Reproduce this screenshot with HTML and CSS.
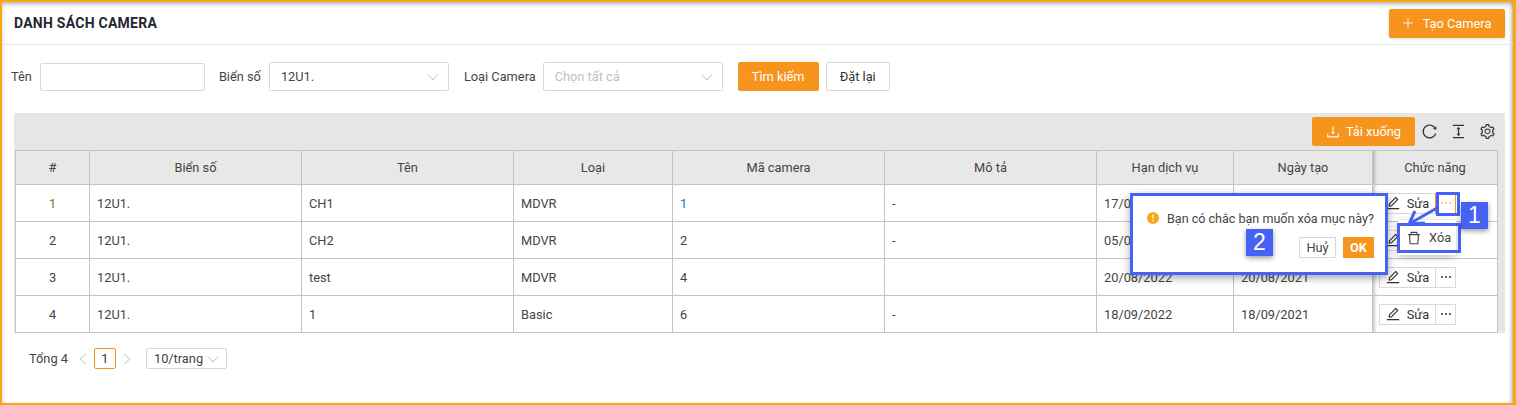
FILE: index.html
```html
<!DOCTYPE html>
<html lang="vi">
<head>
<meta charset="UTF-8" />
<meta name="viewport" content="width=device-width, initial-scale=1" />
<title>Danh sách camera</title>
<link rel="stylesheet" href="styles.css">
</head>
<body>

<svg class="sprite" aria-hidden="true">
  <symbol id="i-download" viewBox="64 64 896 896"><path d="M505.7 661a8 8 0 0 0 12.6 0l112-141.7c4.1-5.2.4-12.9-6.3-12.9h-74.1V168c0-4.4-3.6-8-8-8h-60c-4.4 0-8 3.6-8 8v338.3H400c-6.7 0-10.4 7.7-6.3 12.9l112 141.8zM878 626h-60c-4.4 0-8 3.6-8 8v154H214V634c0-4.4-3.6-8-8-8h-60c-4.4 0-8 3.6-8 8v198c0 17.7 14.3 32 32 32h684c17.7 0 32-14.3 32-32V634c0-4.4-3.6-8-8-8z"/></symbol>
  <symbol id="i-reload" viewBox="64 64 896 896"><path d="M909.1 209.3l-56.4 44.1C775.8 155.1 656.2 92 521.9 92 290 92 102.3 279.5 102 511.5 101.7 743.7 289.8 932 521.9 932c181.3 0 335.8-115 394.6-276.1 1.5-4.2-.7-8.9-4.9-10.3l-56.7-19.5a8 8 0 0 0-10.1 4.8c-1.8 5-3.8 10-5.9 14.9-17.3 41-42.1 77.8-73.7 109.4A344.77 344.77 0 0 1 655.9 829c-42.3 17.9-87.4 27-133.8 27-46.5 0-91.5-9.1-133.8-27A341.5 341.5 0 0 1 279 755.2a342.16 342.16 0 0 1-73.7-109.4c-17.9-42.4-27-87.4-27-133.9s9.1-91.5 27-133.9c17.3-41 42.1-77.8 73.7-109.4 31.6-31.6 68.4-56.4 109.3-73.8 42.3-17.9 87.4-27 133.8-27 46.5 0 91.5 9.1 133.8 27a341.5 341.5 0 0 1 109.3 73.8c9.9 9.9 19.2 20.4 27.8 31.4l-60.2 47a8 8 0 0 0 3 14.1l175.6 43c5 1.2 9.9-2.6 9.9-7.7l.8-180.9c-.1-6.6-7.8-10.3-13-6.2z"/></symbol>
  <symbol id="i-height" viewBox="64 64 896 896"><path d="M840 836H184c-4.4 0-8 3.6-8 8v60c0 4.4 3.6 8 8 8h656c4.4 0 8-3.6 8-8v-60c0-4.4-3.6-8-8-8zm0-724H184c-4.4 0-8 3.6-8 8v60c0 4.4 3.6 8 8 8h656c4.4 0 8-3.6 8-8v-60c0-4.4-3.6-8-8-8zM610.8 378c6 0 9.4-7 5.7-11.7L515.7 238.7a7.14 7.14 0 0 0-11.3 0L403.6 366.3a7.23 7.23 0 0 0 5.7 11.7H476v268h-62.8c-6 0-9.4 7-5.7 11.7l100.8 127.5c2.9 3.7 8.5 3.7 11.3 0l100.8-127.5c3.7-4.7.4-11.7-5.7-11.7H548V378h62.8z"/></symbol>
  <symbol id="i-setting" viewBox="64 64 896 896"><path d="M924.8 625.7l-65.5-56c3.1-19 4.7-38.4 4.7-57.8s-1.6-38.8-4.7-57.8l65.5-56a32.03 32.03 0 0 0 9.3-35.2l-.9-2.6a443.74 443.74 0 0 0-79.7-137.9l-1.8-2.1a32.12 32.12 0 0 0-35.1-9.5l-81.3 28.9c-30-24.6-63.5-44-99.7-57.6l-15.7-85a32.05 32.05 0 0 0-25.8-25.7l-2.7-.5c-52.1-9.4-106.9-9.4-159 0l-2.7.5a32.05 32.05 0 0 0-25.8 25.7l-15.8 85.4a351.86 351.86 0 0 0-99 57.4l-81.9-29.1a32 32 0 0 0-35.1 9.5l-1.8 2.1a446.02 446.02 0 0 0-79.7 137.9l-.9 2.6c-4.5 12.5-.8 26.5 9.3 35.2l66.3 56.6c-3.1 18.8-4.6 38-4.6 57.1 0 19.2 1.5 38.4 4.6 57.1L99 625.5a32.03 32.03 0 0 0-9.3 35.2l.9 2.6c18.1 50.4 44.9 96.9 79.7 137.9l1.8 2.1a32.12 32.12 0 0 0 35.1 9.5l81.9-29.1c29.8 24.5 63.1 43.9 99 57.4l15.8 85.4a32.05 32.05 0 0 0 25.8 25.7l2.7.5a449.4 449.4 0 0 0 159 0l2.7-.5a32.05 32.05 0 0 0 25.8-25.7l15.7-85a350 350 0 0 0 99.7-57.6l81.3 28.9a32 32 0 0 0 35.1-9.5l1.8-2.1c34.8-41.1 61.6-87.5 79.7-137.9l.9-2.6c4.5-12.3.8-26.3-9.3-35zM788.3 465.9c2.5 15.1 3.8 30.6 3.8 46.1s-1.3 31-3.8 46.1l-6.6 40.1 74.7 63.9a370.03 370.03 0 0 1-42.6 73.6L721 702.8l-31.4 25.8c-23.9 19.6-50.5 35-79.3 45.8l-38.1 14.3-17.9 97a377.5 377.5 0 0 1-85 0l-17.9-97.2-37.8-14.5c-28.5-10.8-55-26.2-78.7-45.7l-31.4-25.9-93.4 33.2c-17-22.9-31.2-47.6-42.6-73.6l75.5-64.5-6.5-40c-2.4-14.9-3.7-30.3-3.7-45.5 0-15.3 1.2-30.6 3.7-45.5l6.5-40-75.5-64.5c11.3-26.1 25.6-50.7 42.6-73.6l93.4 33.2 31.4-25.9c23.7-19.5 50.2-34.9 78.7-45.7l37.9-14.3 17.9-97.2c28.1-3.2 56.8-3.2 85 0l17.9 97 38.1 14.3c28.7 10.8 55.4 26.2 79.3 45.8l31.4 25.8 92.8-32.9c17 22.9 31.2 47.7 42.6 73.6L781.8 426l6.5 39.9zM512 326c-97.2 0-176 78.8-176 176s78.8 176 176 176 176-78.8 176-176-78.8-176-176-176zm79.2 255.2A111.6 111.6 0 0 1 512 614c-29.9 0-58-11.7-79.2-32.8A111.6 111.6 0 0 1 400 502c0-29.9 11.7-58 32.8-79.2C454 401.6 482.1 390 512 390c29.9 0 58 11.6 79.2 32.8A111.6 111.6 0 0 1 624 502c0 29.9-11.7 58-32.8 79.2z"/></symbol>
  <symbol id="i-edit" viewBox="64 64 896 896"><path d="M257.7 752c2 0 4-.2 6-.5L431.9 722c2-.4 3.9-1.3 5.3-2.8l423.9-423.9a9.96 9.96 0 0 0 0-14.1L694.9 114.9c-1.9-1.9-4.4-2.9-7.1-2.9s-5.2 1-7.1 2.9L256.8 538.8c-1.5 1.5-2.4 3.3-2.8 5.3l-29.5 168.2a33.5 33.5 0 0 0 9.4 29.8c6.6 6.4 14.9 9.9 23.8 9.9zm67.4-174.4L687.8 215l73.3 73.3-362.7 362.6-88.9 15.7 15.6-89zM880 836H144c-17.7 0-32 14.3-32 32v36c0 4.4 3.6 8 8 8h784c4.4 0 8-3.6 8-8v-36c0-17.7-14.3-32-32-32z"/></symbol>
  <symbol id="i-delete" viewBox="64 64 896 896"><path d="M360 184h-8c4.4 0 8-3.6 8-8v8h304v-8c0 4.4 3.6 8 8 8h-8v72h72v-80c0-35.3-28.7-64-64-64H352c-35.3 0-64 28.7-64 64v80h72v-72zm504 72H160c-17.7 0-32 14.3-32 32v32c0 4.4 3.6 8 8 8h60.4l24.7 523c1.6 34.1 29.8 61 63.9 61h454c34.2 0 62.3-26.8 63.9-61l24.7-523H888c4.4 0 8-3.6 8-8v-32c0-17.7-14.3-32-32-32zM731.3 840H292.7l-24.2-512h487l-24.2 512z"/></symbol>
  <symbol id="i-down" viewBox="0 0 12 12"><path d="M1 3.500 6 9l5-5.500" fill="none" stroke="currentColor" stroke-width="1"/></symbol>
  <symbol id="i-dots" viewBox="0 0 12 12"><circle cx="2" cy="6" r="1"/><circle cx="6" cy="6" r="1"/><circle cx="10" cy="6" r="1"/></symbol>
</svg>

<div class="page">
  <header class="page-head">
    <h1>DANH SÁCH CAMERA</h1>
    <button class="btn btn-primary btn-create">
      <svg class="plus" viewBox="0 0 12 12"><path d="M6 0v12M0 6h12" stroke="currentColor" fill="none"/></svg>
      Tạo Camera
    </button>
  </header>

  <form class="filters">
    <label class="filter-label">Tên</label>
    <input class="field field-name" type="text" />
    <label class="filter-label">Biển số</label>
    <div class="field select select-plate">12U1.<svg class="chev"><use href="#i-down"/></svg></div>
    <label class="filter-label">Loại Camera</label>
    <div class="field select select-type placeholder">Chọn tất cả<svg class="chev"><use href="#i-down"/></svg></div>
    <button type="button" class="btn btn-primary btn-search">Tìm kiếm</button>
    <button type="button" class="btn btn-reset">Đặt lại</button>
  </form>

  <section class="grid-wrap">
    <div class="toolbar">
      <button class="btn btn-primary btn-download"><svg class="ico-14"><use href="#i-download"/></svg>Tải xuống</button>
      <svg class="tool"><use href="#i-reload"/></svg>
      <svg class="tool"><use href="#i-height"/></svg>
      <svg class="tool"><use href="#i-setting"/></svg>
    </div>
    <table class="grid">
      <colgroup>
        <col class="c-no"><col class="c-wide"><col class="c-wide"><col class="c-type"><col class="c-wide"><col class="c-wide"><col class="c-date"><col class="c-created"><col class="c-act">
      </colgroup>
      <thead>
        <tr>
          <th>#</th><th>Biển số</th><th>Tên</th><th>Loại</th><th>Mã camera</th><th>Mô tả</th><th>Hạn dịch vụ</th><th>Ngày tạo</th><th class="fixed">Chức năng</th>
        </tr>
      </thead>
      <tbody>
        <tr>
          <td class="no">1</td><td>12U1.</td><td>CH1</td><td>MDVR</td><td class="code">1</td><td>-</td><td>17/09/2022</td><td>17/09/2021</td>
          <td class="fixed"><div class="actions"><button class="act-edit"><svg class="ico-14"><use href="#i-edit"/></svg>Sửa</button><button class="act-more is-open"><svg class="ico-12"><use href="#i-dots"/></svg></button></div></td>
        </tr>
        <tr>
          <td class="no">2</td><td>12U1.</td><td>CH2</td><td>MDVR</td><td>2</td><td>-</td><td>05/09/2022</td><td>05/09/2021</td>
          <td class="fixed"><div class="actions"><button class="act-edit"><svg class="ico-14"><use href="#i-edit"/></svg>Sửa</button><button class="act-more"><svg class="ico-12"><use href="#i-dots"/></svg></button></div></td>
        </tr>
        <tr>
          <td class="no">3</td><td>12U1.</td><td>test</td><td>MDVR</td><td>4</td><td></td><td>20/08/2022</td><td>20/08/2021</td>
          <td class="fixed"><div class="actions"><button class="act-edit"><svg class="ico-14"><use href="#i-edit"/></svg>Sửa</button><button class="act-more"><svg class="ico-12"><use href="#i-dots"/></svg></button></div></td>
        </tr>
        <tr>
          <td class="no">4</td><td>12U1.</td><td>1</td><td>Basic</td><td>6</td><td>-</td><td>18/09/2022</td><td>18/09/2021</td>
          <td class="fixed"><div class="actions"><button class="act-edit"><svg class="ico-14"><use href="#i-edit"/></svg>Sửa</button><button class="act-more"><svg class="ico-12"><use href="#i-dots"/></svg></button></div></td>
        </tr>
      </tbody>
    </table>
  </section>

  <nav class="pager">
    <span class="total">Tổng 4</span>
    <svg class="pager-arrow" viewBox="0 0 8 12"><path d="M7 1 1 6l6 5" fill="none" stroke="currentColor"/></svg>
    <span class="page-num">1</span>
    <svg class="pager-arrow" viewBox="0 0 8 12"><path d="m1 1 6 5-6 5" fill="none" stroke="currentColor"/></svg>
    <span class="page-size">10/trang<svg class="chev"><use href="#i-down"/></svg></span>
  </nav>

  <!-- popups and tutorial marks sit over the table -->
  <div class="menu"><svg class="ico-14"><use href="#i-delete"/></svg>Xóa</div>

  <div class="popconfirm">
    <p class="pop-msg">
      <svg class="pop-ico" viewBox="0 0 12 12"><circle cx="6" cy="6" r="6" fill="#faa61a"/><path d="M6 2.500v4.200M6 8v1.500" stroke="#fff" stroke-width="1.300" fill="none"/></svg>
      Bạn có chắc bạn muốn xóa mục này?
    </p>
    <div class="pop-btns">
      <button class="pop-cancel">Huỷ</button>
      <button class="pop-ok">OK</button>
    </div>
  </div>

  <div class="mark mark-more"></div>
  <div class="mark mark-del"></div>
  <svg class="arrow" viewBox="0 0 34 22"><path d="M31 2 3 18M9 5 3 18l16-1" stroke="#4662f5" stroke-width="3" fill="none"/></svg>
  <span class="step step-1">1</span>
  <span class="step step-2">2</span>
</div>

</body>
</html>
```

FILE: styles.css
```css
* {
  box-sizing: border-box;
}

body {
  margin: 0;
  background: #fff;
  font-family: Roboto, 'Liberation Sans', Arial, sans-serif;
  font-size: 12.8px;
  color: #333;
}

button {
  font-family: inherit;
  font-size: 12.8px;
  cursor: pointer;
}

.sprite {
  display: none;
}

.page {
  position: relative;
  height: 405px;
  overflow: hidden;
  border: solid #f9a90f;
  border-width: 2px 3px 2px 2px;
  box-shadow: inset 0 3px 5px -1px rgb(0 0 0 / 0.28), inset -3px 0 4px -2px rgb(0 0 0 / 0.3);
}

/* Header */
.page-head {
  display: flex;
  align-items: center;
  justify-content: space-between;
  height: 43px;
  padding: 0 8px 0 12px;
  border-bottom: 1px solid #e8e8e8;
}

.page-head h1 {
  margin: 0;
  font-size: 14px;
  font-weight: 700;
  letter-spacing: 0.25px;
  color: #262633;
}

.btn {
  height: 29px;
  padding: 0 14px;
  background: #fff;
  border: 1px solid #d9d9d9;
  border-radius: 2px;
  color: #333;
  white-space: nowrap;
}

.btn-primary {
  background: #f7941d;
  border-color: #f7941d;
  color: #fff;
}

.btn-create {
  display: flex;
  align-items: center;
  justify-content: center;
  gap: 10px;
  width: 116px;
  padding: 0;
  box-shadow: 0 1px 3px rgb(0 0 0 / 0.15);
}

.plus {
  width: 10px;
  height: 10px;
}

/* Filters */
.filters {
  display: flex;
  align-items: center;
  height: 29px;
  margin: 17px 0 0 9px;
}

.filter-label {
  color: #444;
}

.field {
  height: 29px;
  background: #fff;
  border: 1px solid #d9d9d9;
  border-radius: 2px;
  color: #444;
  font: inherit;
}

.field-name {
  width: 165px;
  height: 28px;
  margin: 0 14px 0 8px;
}

.select {
  display: flex;
  align-items: center;
  justify-content: space-between;
  width: 180px;
  padding: 0 9px 0 11px;
}

.select-plate {
  margin: 0 15px 0 8px;
}

.select-type {
  margin: 0 15px 0 7px;
}

.placeholder {
  color: #bfbfbf;
}

.chev {
  flex: none;
  width: 12px;
  height: 12px;
  color: #bfbfbf;
}

.btn-search {
  width: 81px;
  padding: 0;
}

.btn-reset {
  width: 64px;
  margin-left: 7px;
  padding: 0;
}

/* Table */
.grid-wrap {
  width: 1491px;
  margin: 22px 0 0 12px;
  background: #e6e6e6;
}

.toolbar {
  display: flex;
  align-items: center;
  justify-content: flex-end;
  height: 37px;
  padding: 0 10px 0 0;
}

.btn-download {
  display: flex;
  align-items: center;
  justify-content: center;
  gap: 6px;
  width: 103px;
  height: 29px;
  padding: 0;
}

.ico-14 {
  flex: none;
  width: 14px;
  height: 14px;
  fill: currentColor;
}

.ico-12 {
  width: 12px;
  height: 12px;
  fill: currentColor;
}

.tool {
  width: 15px;
  height: 15px;
  margin-left: 14px;
  fill: #333;
}

.tool:first-of-type {
  margin-left: 7px;
}

.grid {
  width: 1482px;
  margin-left: 1px;
  table-layout: fixed;
  border-collapse: collapse;
}

.c-no { width: 74px; }
.c-wide { width: 212px; }
.c-type { width: 159px; }
.c-date { width: 137px; }
.c-created { width: 139px; }
.c-act { width: 125px; }

.grid th,
.grid td {
  padding: 0 7px;
  border: 1px solid #c4c4c4;
  font-weight: 400;
  text-align: left;
  color: #444;
}

.grid th {
  height: 34px;
  background: #e8e8e8;
  text-align: center;
}

.grid td {
  height: 37px;
  background: #fff;
}

.grid td.no {
  text-align: center;
}

.grid tbody tr:first-child td.no {
  color: #8a6d1f;
}

.grid td.code {
  color: #1976b8;
}

.grid .fixed {
  box-shadow: inset 4px 0 3px -2px rgb(0 0 0 / 0.2);
}

.actions {
  display: flex;
  margin-left: -1px;
}

.act-edit,
.act-more {
  display: flex;
  align-items: center;
  justify-content: center;
  height: 21px;
  background: #fff;
  border: 1px solid #d9d9d9;
  color: #333;
}

.act-edit {
  gap: 7px;
  width: 57px;
  padding: 0;
}

.act-more {
  width: 21px;
  margin-left: -1px;
  padding: 0;
}

.act-more.is-open {
  border-color: #f7941d;
  color: #f9b878;
}

/* Pagination */
.pager {
  display: flex;
  align-items: center;
  height: 21px;
  margin: 15px 0 0 27px;
}

.total {
  margin-right: 11px;
  color: #444;
}

.pager-arrow {
  width: 8px;
  height: 12px;
  color: #c4c4c4;
}

.page-num {
  display: flex;
  align-items: center;
  justify-content: center;
  width: 22px;
  height: 21px;
  margin: 0 7px;
  border: 1px solid #f7941d;
  border-radius: 2px;
}

.page-size {
  display: flex;
  align-items: center;
  justify-content: space-between;
  width: 81px;
  height: 21px;
  margin-left: 15px;
  padding: 0 7px;
  border: 1px solid #d9d9d9;
  border-radius: 2px;
  color: #444;
}

/* Overlays */
.menu {
  position: absolute;
  left: 1396px;
  top: 218px;
  display: flex;
  align-items: center;
  gap: 8px;
  width: 58px;
  height: 35px;
  padding-left: 9px;
  background: #fff;
  box-shadow: 0 2px 8px rgb(0 0 0 / 0.25);
  color: #444;
}

.popconfirm {
  position: absolute;
  left: 1128px;
  top: 191px;
  width: 258px;
  height: 82px;
  padding: 13px 11px 0 14px;
  background: #fff;
  border: 3px solid #4662f5;
  box-shadow: 0 3px 8px rgb(0 0 0 / 0.35);
}

.pop-msg {
  display: flex;
  align-items: center;
  gap: 8px;
  margin: 0;
  height: 18px;
  font-size: 12.55px;
  color: #444;
  white-space: nowrap;
}

.pop-ico {
  flex: none;
  width: 12px;
  height: 12px;
}

.pop-btns {
  display: flex;
  justify-content: flex-end;
  gap: 7px;
  margin-top: 10px;
}

.pop-cancel,
.pop-ok {
  height: 21px;
  padding: 0;
  border: 1px solid #d9d9d9;
  background: #fff;
  color: #444;
}

.pop-cancel {
  width: 37px;
}

.pop-ok {
  width: 31px;
  background: #f7941d;
  border-color: #f7941d;
  color: #fff;
  font-weight: 700;
}

.mark {
  position: absolute;
  border: 3px solid #4662f5;
}

.mark-more {
  left: 1434px;
  top: 190px;
  width: 24px;
  height: 24px;
}

.mark-del {
  left: 1395px;
  top: 221px;
  width: 64px;
  height: 30px;
}

.arrow {
  position: absolute;
  left: 1404px;
  top: 204px;
  width: 34px;
  height: 22px;
}

.step {
  position: absolute;
  display: flex;
  align-items: center;
  justify-content: center;
  width: 27px;
  height: 27px;
  background: #4662f5;
  box-shadow: 0 2px 5px rgb(0 0 0 / 0.4);
  color: #fff;
  font-family: 'Liberation Sans', Arial, sans-serif;
  font-size: 23px;
}

.step-1 {
  left: 1459px;
  top: 200px;
}

.step-2 {
  left: 1244px;
  top: 227px;
}
```
